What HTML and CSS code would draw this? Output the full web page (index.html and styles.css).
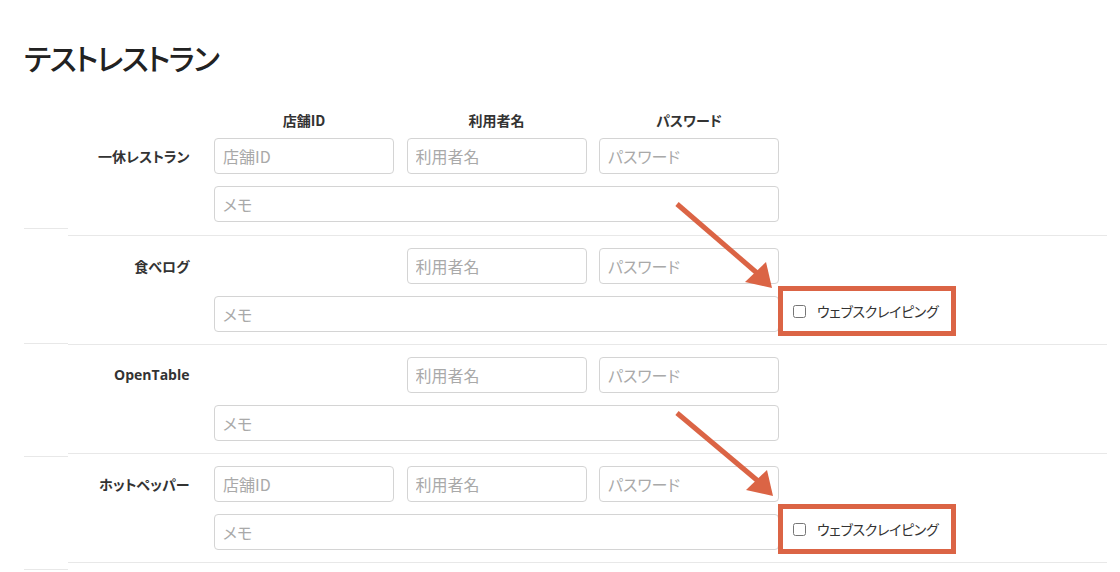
FILE: index.html
```html
<!DOCTYPE html>
<html lang="ja">
<head>
<meta charset="utf-8">
<title>テストレストラン</title>
<link rel="stylesheet" href="styles.css">
</head>
<body>
<main class="page">
  <h1 class="title">テストレストラン</h1>
  <div class="board">
    <div class="stubs">
      <div class="stub stub-1"></div>
      <div class="stub stub-2"></div>
      <div class="stub stub-3"></div>
      <div class="stub stub-4"></div>
    </div>
    <div class="list">
      <div class="grid heads">
        <span class="head c-store">店舗ID</span>
        <span class="head c-user">利用者名</span>
        <span class="head c-pass">パスワード</span>
      </div>

      <div class="grid row row-first">
        <div class="label">一休レストラン</div>
        <input class="field c-store" placeholder="店舗ID">
        <input class="field c-user" placeholder="利用者名">
        <input class="field c-pass" type="password" placeholder="パスワード">
        <input class="field memo" placeholder="メモ">
      </div>

      <div class="grid row">
        <div class="label">食べログ</div>
        <input class="field c-user" placeholder="利用者名">
        <input class="field c-pass" type="password" placeholder="パスワード">
        <input class="field memo" placeholder="メモ">
        <label class="scrape"><input type="checkbox" class="check"><span>ウェブスクレイピング</span></label>
      </div>

      <div class="grid row">
        <div class="label latin">OpenTable</div>
        <input class="field c-user" placeholder="利用者名">
        <input class="field c-pass" type="password" placeholder="パスワード">
        <input class="field memo" placeholder="メモ">
      </div>

      <div class="grid row">
        <div class="label">ホットペッパー</div>
        <input class="field c-store" placeholder="店舗ID">
        <input class="field c-user" placeholder="利用者名">
        <input class="field c-pass" type="password" placeholder="パスワード">
        <input class="field memo" placeholder="メモ">
        <label class="scrape"><input type="checkbox" class="check"><span>ウェブスクレイピング</span></label>
      </div>
    </div>
  </div>

  <svg class="arrows" width="1120" height="572" viewBox="0 0 1120 572" aria-hidden="true">
    <g fill="#db6445" stroke="#db6445">
      <line x1="677" y1="204" x2="757" y2="273" stroke-width="5"/>
      <polygon points="772,288 745,282 766,262" stroke="none"/>
      <line x1="677" y1="413" x2="758" y2="481" stroke-width="5"/>
      <polygon points="773,496 746,490 767,470" stroke="none"/>
    </g>
  </svg>
</main>
</body>
</html>
```

FILE: styles.css
```css
* { box-sizing: border-box; }

html, body {
  margin: 0;
  background: #fff;
}

body {
  font-family: "Noto Sans CJK JP", "Noto Sans", sans-serif;
  font-feature-settings: "palt";
  color: #333;
}

.page {
  position: relative;
  width: 1120px;
  height: 572px;
  padding: 0 13px 0 24px;
  overflow: hidden;
}

.title {
  margin: 38px 0 0;
  font-size: 30px;
  line-height: 38px;
  letter-spacing: -1.5px;
  font-weight: 500;
  color: #222;
}

.board {
  margin-top: 34px;
  display: grid;
  grid-template-columns: 44px 1fr;
}

.stub {
  border-bottom: 1px solid #e8e8e8;
}
.stub-1 { height: 119px; }
.stub-2 { height: 115px; }
.stub-3 { height: 113px; }
.stub-4 { height: 113px; }

.grid {
  display: grid;
  grid-template-columns: 133.5px 180px 180px 180px 1fr;
  column-gap: 12.5px;
  row-gap: 12px;
}

.heads {
  height: 28px;
  align-items: start;
}

.head {
  grid-row: 1;
  text-align: center;
  font-size: 14px;
  line-height: 20px;
  font-weight: 700;
  color: #333;
}

.c-store { grid-column: 2; grid-row: 1; }
.c-user { grid-column: 3; grid-row: 1; }
.c-pass { grid-column: 4; grid-row: 1; }

.row {
  padding: 12px 0;
  border-bottom: 1px solid #e8e8e8;
}

.row-first {
  padding: 0 0 13px;
}

.label {
  grid-column: 1;
  grid-row: 1;
  align-self: center;
  text-align: right;
  padding-right: 12px;
  font-size: 14px;
  line-height: 20px;
  font-weight: 700;
  color: #333;
}

.label.latin {
  font-family: "Open Sans", "Noto Sans CJK JP", sans-serif;
  font-weight: 700;
}

.field {
  height: 36px;
  width: 100%;
  margin: 0;
  padding: 0 8px;
  border: 1px solid #d4d4d4;
  border-radius: 4px;
  background: #fff;
  font-family: "Noto Sans CJK JP", "Noto Sans", sans-serif;
  font-feature-settings: "palt";
  font-size: 16px;
  color: #333;
  outline: none;
}

.field::placeholder {
  color: #a9a9a9;
}

.memo {
  grid-column: 2 / span 3;
  grid-row: 2;
}

.scrape {
  grid-column: 5;
  grid-row: 2;
  justify-self: start;
  align-self: start;
  width: 178px;
  height: 50px;
  margin: -10px 0 -4px -13.5px;
  padding-left: 10px;
  border: 5px solid #db6445;
  display: flex;
  align-items: center;
  gap: 11px;
  font-size: 14px;
  line-height: 20px;
  letter-spacing: -0.3px;
  color: #333;
  background: #fff;
}

.check {
  width: 13px;
  height: 13px;
  margin: 0;
}

.arrows {
  position: absolute;
  left: 0;
  top: 0;
  pointer-events: none;
}
```
